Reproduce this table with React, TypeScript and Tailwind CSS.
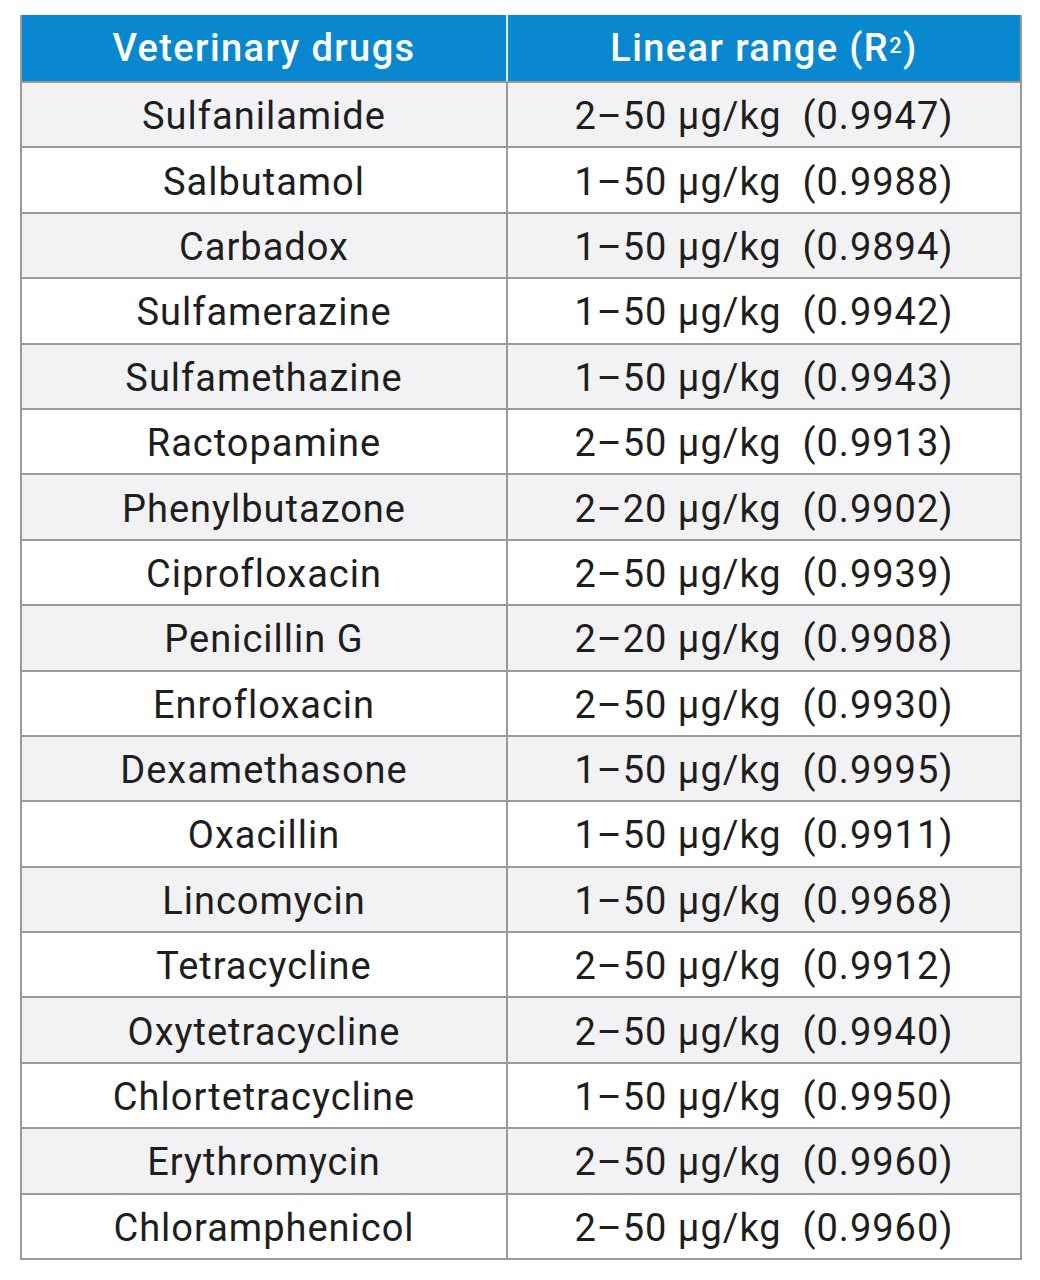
const rows: [string, string, string][] = [
  ["Sulfanilamide", "2–50", "0.9947"],
  ["Salbutamol", "1–50", "0.9988"],
  ["Carbadox", "1–50", "0.9894"],
  ["Sulfamerazine", "1–50", "0.9942"],
  ["Sulfamethazine", "1–50", "0.9943"],
  ["Ractopamine", "2–50", "0.9913"],
  ["Phenylbutazone", "2–20", "0.9902"],
  ["Ciprofloxacin", "2–50", "0.9939"],
  ["Penicillin G", "2–20", "0.9908"],
  ["Enrofloxacin", "2–50", "0.9930"],
  ["Dexamethasone", "1–50", "0.9995"],
  ["Oxacillin", "1–50", "0.9911"],
  ["Lincomycin", "1–50", "0.9968"],
  ["Tetracycline", "2–50", "0.9912"],
  ["Oxytetracycline", "2–50", "0.9940"],
  ["Chlortetracycline", "1–50", "0.9950"],
  ["Erythromycin", "2–50", "0.9960"],
  ["Chloramphenicol", "2–50", "0.9960"],
];

export default function App() {
  return (
    <div className="min-h-screen bg-white pl-[20px] pt-[15px]" style={{ fontFamily: "Roboto, 'Noto Sans', sans-serif" }}>
      <div className="w-[1002px] border-2 border-t-0 border-[#9a9a9a]">
        <div className="grid grid-cols-[486px_1fr] bg-[#0a88cf] text-white font-medium text-[38px] tracking-[1.4px]">
          <div className="h-[66px] flex items-center justify-center border-r-2 border-[#d8ecf7]">Veterinary drugs</div>
          <div className="h-[66px] flex items-center justify-center">
            Linear range (R<sup className="text-[22px] relative -top-[2px]">2</sup>)
          </div>
        </div>
        {rows.map(([name, range, r2], i) => (
          <div
            key={name}
            className={`grid grid-cols-[486px_1fr] text-[#1e1e1e] text-[38px] tracking-[1px] border-t-2 border-[#9a9a9a] ${i % 2 === 0 ? "bg-[#f2f2f4]" : "bg-white"}`}
          >
            <div className="h-[63.4px] flex items-center justify-center pt-[4px] border-r-2 border-[#9a9a9a]">{name}</div>
            <div className="h-[63.4px] flex items-center justify-center pt-[4px] whitespace-pre">
              {`${range} μg/kg  (${r2})`}
            </div>
          </div>
        ))}
      </div>
    </div>
  );
}
